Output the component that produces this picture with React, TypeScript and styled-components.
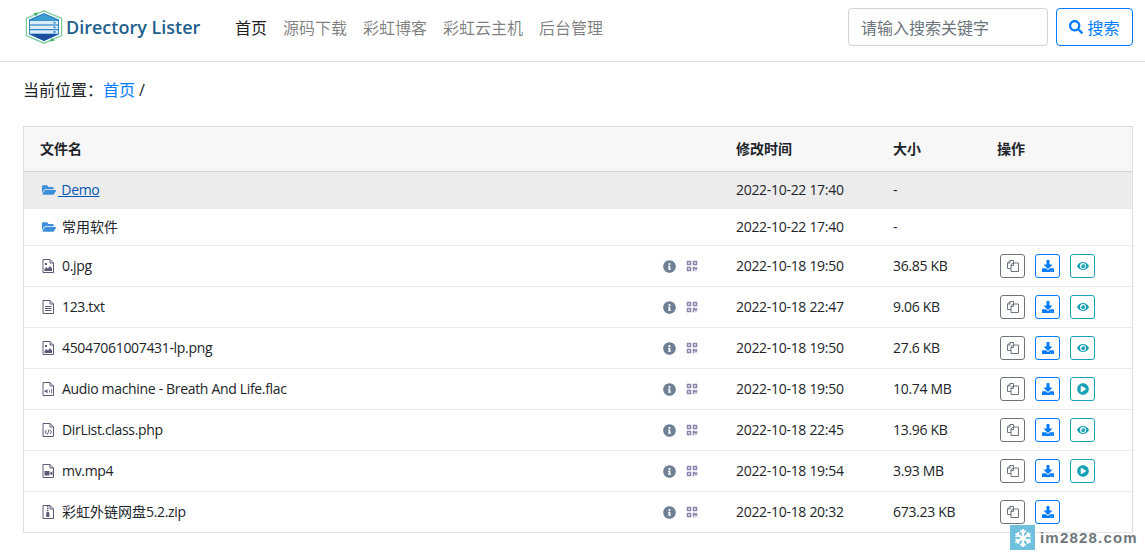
import React from "react";
import styled, { createGlobalStyle } from "styled-components";
import {
  FaFolderOpen, FaInfoCircle, FaQrcode, FaDownload,
  FaEye, FaPlayCircle, FaSearch, FaSnowflake,
} from "react-icons/fa";

const Global = createGlobalStyle`
  html, body { margin: 0; padding: 0; background: #fff; overflow: hidden; }
  body { font-family: "Open Sans", "Noto Sans CJK SC", sans-serif; color: #212529; font-size: 14px; }
  * { box-sizing: border-box; }
`;

const Page = styled.div`width: 1145px; height: 555px; position: relative; overflow: hidden;`;
const Navbar = styled.header`
  height: 62px; border-bottom: 1px solid #e1e1e1; display: flex; align-items: center;
  padding: 0 12px 7px 25px;
`;
const Brand = styled.div`display: flex; align-items: center; gap: 4px; width: 210px;`;
const BrandText = styled.span`
  font-family: "Open Sans", sans-serif; font-weight: 600; font-size: 18px; color: #1f5f8e; white-space: nowrap; margin-left: -1px;
`;
const Nav = styled.nav`display: flex; gap: 16px; flex: 1;`;
const NavLink = styled.a<{ $active?: boolean }>`
  font-size: 16px; color: ${(p) => (p.$active ? "rgba(0,0,0,.9)" : "rgba(0,0,0,.5)")};
`;
const SearchForm = styled.div`display: flex; gap: 8px;`;
const SearchInput = styled.div`
  width: 200px; height: 38px; border: 1px solid #ced4da; border-radius: 4px; padding: 0 12px;
  display: flex; align-items: center; font-size: 16px; color: #6c757d;
`;
const SearchButton = styled.div`
  width: 77px; height: 38px; border: 1px solid #007bff; border-radius: 4px; color: #007bff;
  display: flex; align-items: center; justify-content: center; gap: 4px; font-size: 16px;
`;
const Crumbs = styled.div`
  padding: 16px 23px 0; height: 64px; font-size: 16px; line-height: 24px; display: flex;
`;
const CrumbLink = styled.a`color: #007bff;`;
const CrumbSep = styled.span`margin-left: 4px;`;
const Table = styled.div`
  margin: 0 12px 0 23px; border: 1px solid #dcdcdc; border-bottom: 1px solid #e4e4e4;
`;
const Row = styled.div<{ $head?: boolean; $hover?: boolean; $h: number }>`
  display: grid; grid-template-columns: 696px 157px 104px 1fr; align-items: center;
  height: ${(p) => p.$h}px; line-height: 20px;
  background: ${(p) => (p.$head ? "#f7f7f7" : p.$hover ? "#ececec" : "#fff")};
  border-bottom: ${(p) => (p.$head ? "1px solid #d2d2d2" : "1px solid #ececec")};
  font-weight: ${(p) => (p.$head ? 700 : 400)};
  &:last-child { border-bottom: 0; }
`;
const Cell = styled.div`padding-left: 16px; white-space: nowrap; letter-spacing: -.3px;`;
const HeadCell = styled.div`padding-left: 16px; white-space: nowrap;`;
const NameCell = styled.div`display: flex; align-items: center; padding: 0 22px 0 16px;`;
const Ico = styled.span<{ $w: number }>`
  width: ${(p) => p.$w}px; flex: none; display: inline-flex; align-items: center; padding-left: 2px;
  color: #3d8fd9; font-size: 14px;
`;
const FileSvg = styled.svg`display: block; fill: none; stroke: #5b5b78; stroke-width: 1;`;
const Name = styled.span<{ $link?: boolean }>`
  flex: 1; color: ${(p) => (p.$link ? "#0056b3" : "#212529")};
  text-decoration: ${(p) => (p.$link ? "underline" : "none")};
  letter-spacing: -.33px;
`;
const Cjk = styled.span`letter-spacing: 0;`;
const Meta = styled.span`display: flex; align-items: center; gap: 10px; font-size: 13px;`;
const InfoIco = styled(FaInfoCircle)`color: #6f7f96; font-size: 13px;`;
const QrIco = styled(FaQrcode)`color: #8a85ad; font-size: 12px;`;
const Ops = styled.div`display: flex; gap: 10px; padding-left: 19px;`;
const OpBtn = styled.span<{ $c: string }>`
  width: 25px; height: 24px; border: 1px solid ${(p) => p.$c}; border-radius: 3px; color: ${(p) => p.$c};
  display: inline-flex; align-items: center; justify-content: center; font-size: 12px;
`;
const Watermark = styled.div`
  position: absolute; left: 1010px; top: 525px; display: flex; align-items: center; gap: 5px;
`;
const Flake = styled.span`
  width: 25px; height: 25px; background: #6fc0dd; color: #fff; display: flex; align-items: center; justify-content: center; font-size: 18px;
`;
const MarkText = styled.span`
  font-family: "Liberation Sans", sans-serif; font-weight: 700; font-size: 15px; color: #6f777c; letter-spacing: 1.2px;
`;

const Logo = () => (
  <svg width="38" height="34" viewBox="0 0 38 34">
    <path d="M19 .8 L36.6 8.5 V25.5 L19 33.2 L1.4 25.5 V8.5 Z" fill="#fff" stroke="#7fcba0" strokeWidth="1.3" />
    <path d="M19 3 L34 9.5 V24.5 L19 31 L4 24.5 V9.5 Z" fill="#2f86c6" />
    <path d="M5 24 H33 L19 31 Z" fill="#1d4f9f" />
    <path d="M5 10.5 L19 4.5 L33 10.5 Z" fill="#3ba0cf" />
    <rect x="5" y="11" width="28" height="3.4" fill="#dcedf9" />
    <rect x="5" y="15.6" width="28" height="3.4" fill="#dcedf9" />
    <rect x="5" y="20.2" width="28" height="3.4" fill="#dcedf9" />
    <rect x="28.5" y="11.8" width="2" height="1.8" fill="#2f86c6" />
    <rect x="28.5" y="16.4" width="2" height="1.8" fill="#2f86c6" />
    <rect x="28.5" y="21" width="2" height="1.8" fill="#2f86c6" />
    <path d="M8 3.5 l5-1 -1.5 3.5 z M30 30.5 l-5 1 1.5-3.5 z" fill="#3faa6a" />
  </svg>
);

const pageOutline = "M1 .5 H8 L11.5 4 V13.5 H1 Z M8 .5 V4 H11.5";
const FileIcon = ({ children }: { children?: React.ReactNode }) => (
  <FileSvg width="13" height="14" viewBox="0 0 13 14">
    <path d={pageOutline} />
    {children}
  </FileSvg>
);
const Solid = ({ d }: { d: string }) => <path d={d} fill="#5b5b78" stroke="none" />;
const Image = () => <FileIcon><Solid d="M3 4h2v2H3z M2.5 12 V10 L4.5 8 L6 9.5 L8 7 L10 9.5 V12 Z" /></FileIcon>;
const Text = () => <FileIcon><path d="M3 6.5h6.5 M3 8.5h6.5 M3 10.5h6.5" /></FileIcon>;
const Audio = () => <FileIcon><Solid d="M2.5 8.5h1.2L5.5 7v4.5L3.7 10H2.5z M7 8h.8v2.5H7z M9 7h.8v4.5H9z" /></FileIcon>;
const Code = () => <FileIcon><path d="M4.5 7 L3 9 L4.5 11 M8 7 L9.5 9 L8 11 M7 6.5 L5.5 11.5" /></FileIcon>;
const Video = () => <FileIcon><Solid d="M2.5 7h5v4.5h-5z M8 9l2.5-2v4.5L8 9.8z" /></FileIcon>;
const Zip = () => <FileIcon><Solid d="M5 1h1.5v1.2H5z M5 3h1.5v1.2H5z M5 5h1.5v1.2H5z M4.5 7h2.5l.6 3.5a1.8 1.8 0 1 1-3.6 0z" /></FileIcon>;

const CopyIcon = () => (
  <svg width="14" height="14" viewBox="0 0 14 14" fill="none" stroke="currentColor" strokeWidth="1">
    <path d="M5 9.5 H1.5 V4 L4 1.5 H7.5 V4" />
    <path d="M4 1.5 V4 H1.5" />
    <path d="M5 5.5 L7.5 4 H12.5 V12.5 H5 Z" />
    <path d="M7.5 4 V6.5 H5" />
  </svg>
);

type FileRow = { name: React.ReactNode; key: string; date: string; size: string; icon: React.ReactNode; action: "view" | "play" | "none"; h: number };
const files: FileRow[] = [
  { key: "a", name: "0.jpg", date: "2022-10-18 19:50", size: "36.85 KB", icon: <Image />, action: "view", h: 41 },
  { key: "b", name: "123.txt", date: "2022-10-18 22:47", size: "9.06 KB", icon: <Text />, action: "view", h: 41 },
  { key: "c", name: "45047061007431-lp.png", date: "2022-10-18 19:50", size: "27.6 KB", icon: <Image />, action: "view", h: 41 },
  { key: "d", name: "Audio machine - Breath And Life.flac", date: "2022-10-18 19:50", size: "10.74 MB", icon: <Audio />, action: "play", h: 41 },
  { key: "e", name: "DirList.class.php", date: "2022-10-18 22:45", size: "13.96 KB", icon: <Code />, action: "view", h: 41 },
  { key: "f", name: "mv.mp4", date: "2022-10-18 19:54", size: "3.93 MB", icon: <Video />, action: "play", h: 41 },
  { key: "g", name: <><Cjk>彩虹外链网盘</Cjk>5.2.zip</>, date: "2022-10-18 20:32", size: "673.23 KB", icon: <Zip />, action: "none", h: 40 },
];

export default function App() {
  return (
    <Page>
      <Global />
      <Navbar>
        <Brand><Logo /><BrandText>Directory Lister</BrandText></Brand>
        <Nav>
          <NavLink $active>首页</NavLink>
          <NavLink>源码下载</NavLink>
          <NavLink>彩虹博客</NavLink>
          <NavLink>彩虹云主机</NavLink>
          <NavLink>后台管理</NavLink>
        </Nav>
        <SearchForm>
          <SearchInput>请输入搜索关键字</SearchInput>
          <SearchButton><FaSearch size={14} />搜索</SearchButton>
        </SearchForm>
      </Navbar>
      <Crumbs>当前位置：<CrumbLink>首页</CrumbLink><CrumbSep>/</CrumbSep></Crumbs>
      <Table>
        <Row $head $h={45}>
          <HeadCell>文件名</HeadCell><HeadCell>修改时间</HeadCell><HeadCell>大小</HeadCell><HeadCell>操作</HeadCell>
        </Row>
        <Row $hover $h={37}>
          <NameCell><Ico $w={18}><FaFolderOpen /></Ico><Name $link>&nbsp;Demo</Name></NameCell>
          <Cell>2022-10-22 17:40</Cell><Cell>-</Cell><Cell />
        </Row>
        <Row $h={37}>
          <NameCell><Ico $w={22}><FaFolderOpen /></Ico><Cjk>常用软件</Cjk></NameCell>
          <Cell>2022-10-22 17:40</Cell><Cell>-</Cell><Cell />
        </Row>
        {files.map((f) => (
          <Row key={f.key} $h={f.h}>
            <NameCell>
              <Ico $w={22}>{f.icon}</Ico>
              <Name>{f.name}</Name>
              <Meta><InfoIco /><QrIco /></Meta>
            </NameCell>
            <Cell>{f.date}</Cell>
            <Cell>{f.size}</Cell>
            <Ops>
              <OpBtn $c="#6c757d"><CopyIcon /></OpBtn>
              <OpBtn $c="#007bff"><FaDownload /></OpBtn>
              {f.action === "view" && <OpBtn $c="#17a2b8"><FaEye /></OpBtn>}
              {f.action === "play" && <OpBtn $c="#17a2b8"><FaPlayCircle /></OpBtn>}
            </Ops>
          </Row>
        ))}
      </Table>
      <Watermark>
        <Flake><FaSnowflake /></Flake>
        <MarkText>im2828.com</MarkText>
      </Watermark>
    </Page>
  );
}
